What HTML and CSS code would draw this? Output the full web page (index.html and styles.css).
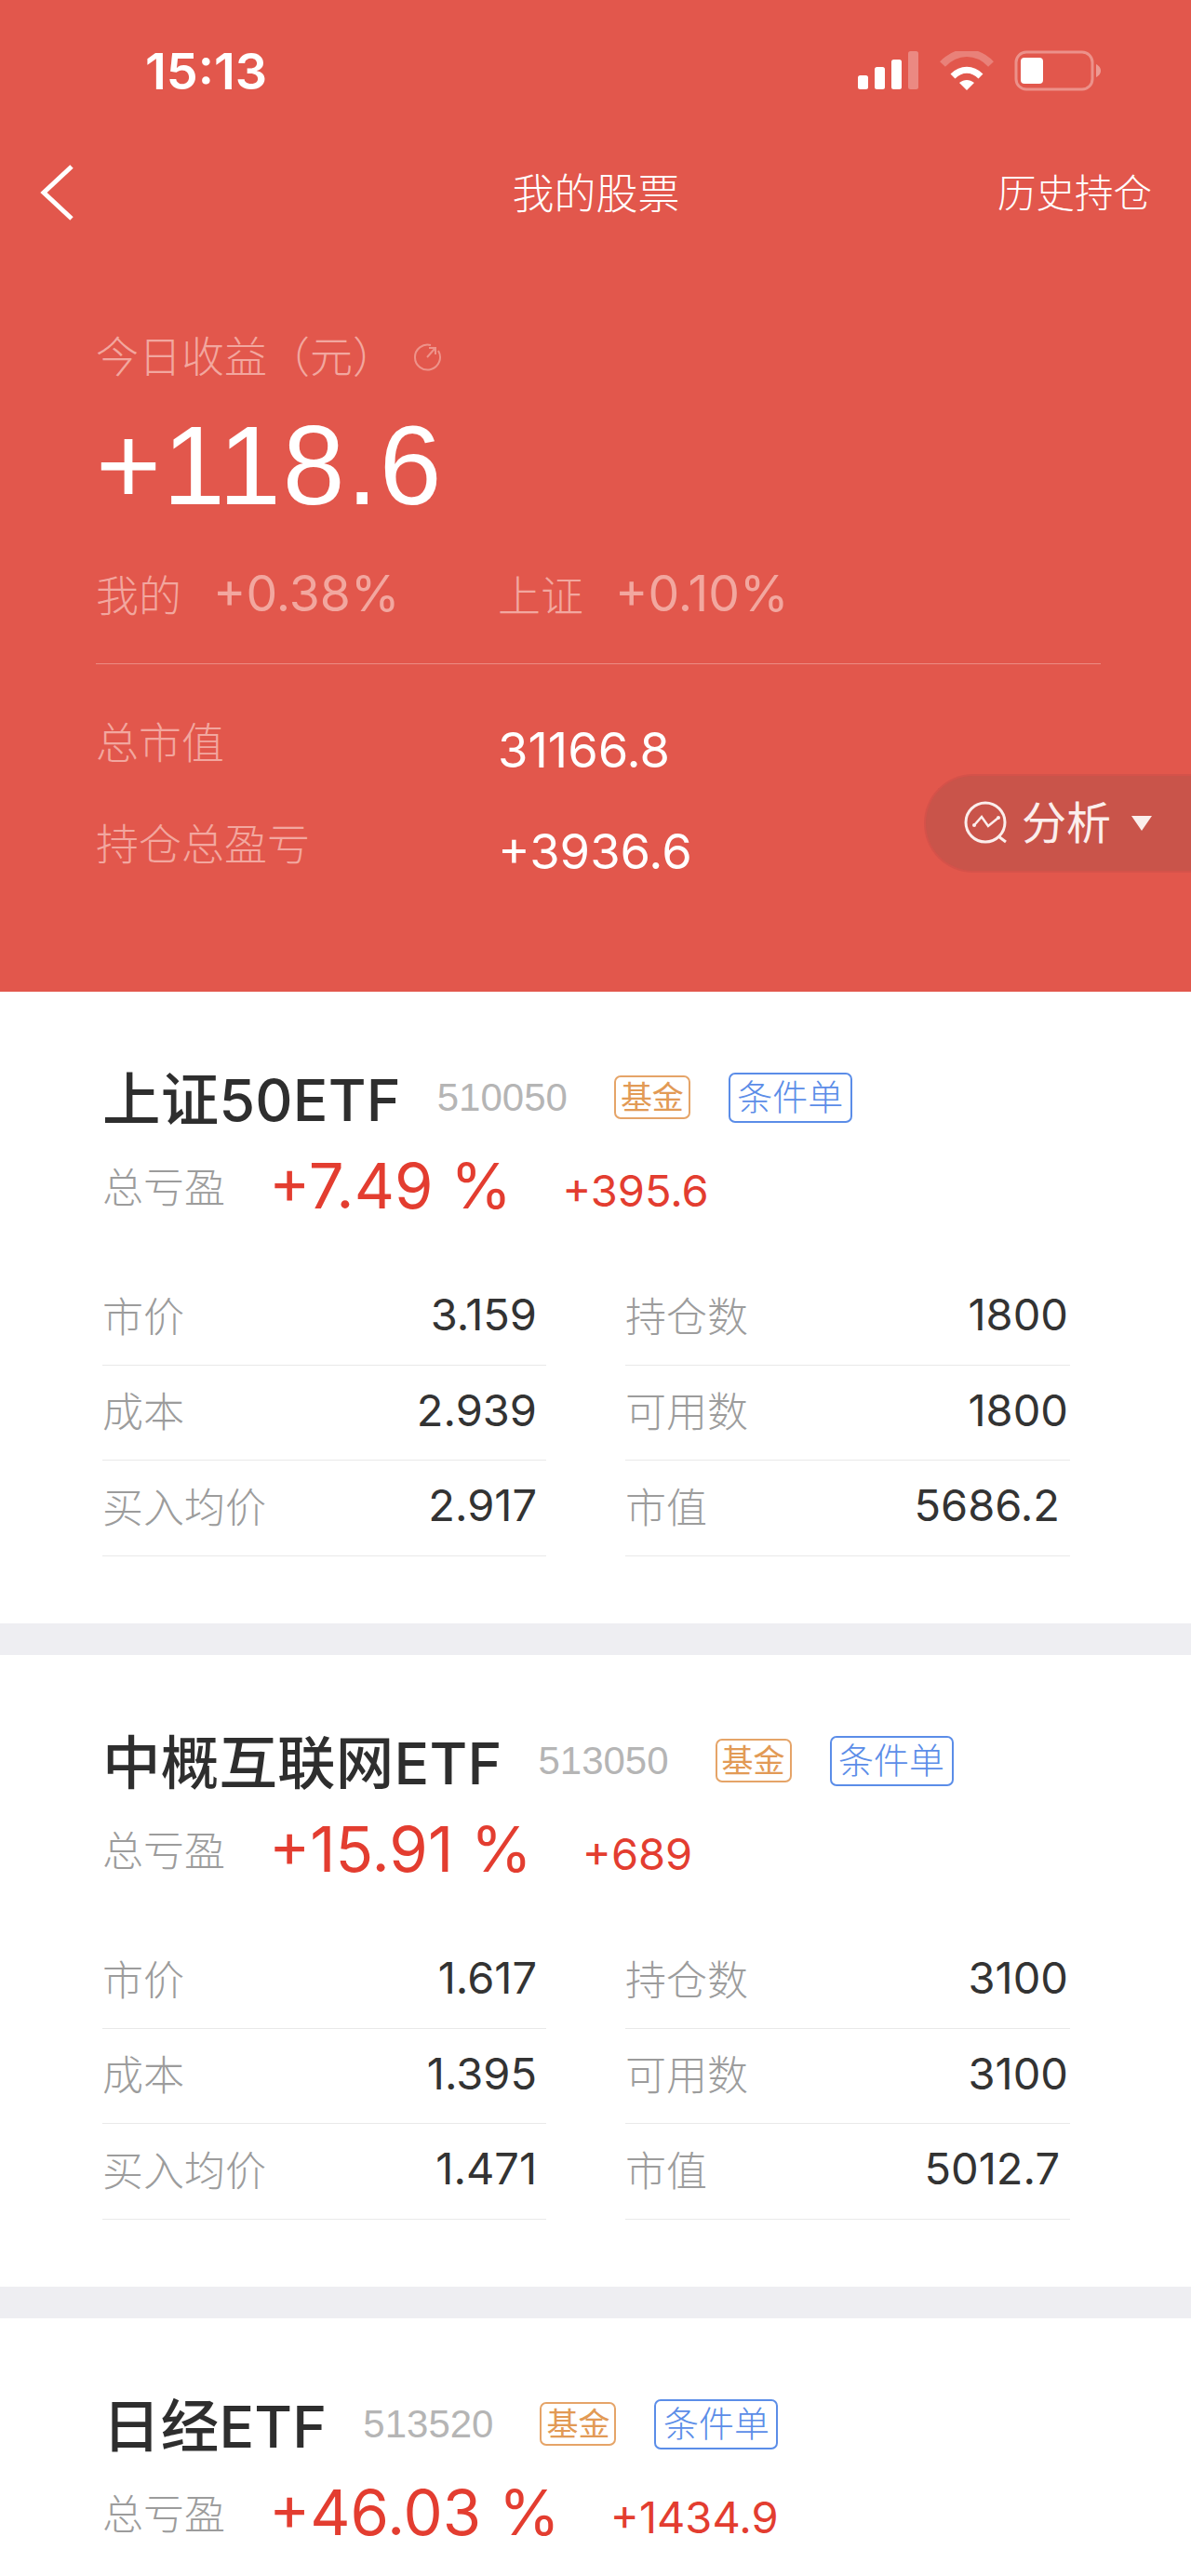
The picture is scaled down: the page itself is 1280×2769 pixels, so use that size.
FILE: index.html
```html
<!DOCTYPE html>
<html lang="zh-CN">
<head>
    <meta charset="UTF-8">
    <meta name="viewport" content="width=device-width, initial-scale=1.0">
    <title>我的股票</title>
    <link rel="stylesheet" href="styles.css">
</head>
<body>
    <div class="page">
        <header class="header">
            <div class="status">
                <span class="time">15:13</span>
                <div class="status-icons">
                    <svg width="66" height="42" viewBox="0 0 66 42">
                        <rect x="0" y="26" width="11" height="15" rx="2.5" fill="#fff"/>
                        <rect x="18" y="17" width="11" height="24" rx="2.5" fill="#fff"/>
                        <rect x="36" y="9" width="11" height="32" rx="2.5" fill="#fff"/>
                        <rect x="54" y="0" width="11" height="41" rx="2.5" fill="#fff" opacity="0.3"/>
                    </svg>
                    <svg width="58" height="42" viewBox="0 0 58 42">
                        <path d="M3 14 C18 -2 40 -2 55 14" fill="none" stroke="#fff" stroke-width="8" opacity="0.25"/>
                        <path d="M14 27 C23 18 35 18 44 27" fill="none" stroke="#fff" stroke-width="7"/>
                        <path d="M21 34 C26 30 32 30 37 34 L29 42 Z" fill="#fff"/>
                    </svg>
                    <svg width="93" height="44" viewBox="0 0 93 44">
                        <rect x="2" y="2" width="82" height="40" rx="11" fill="none" stroke="#fff" stroke-width="3" opacity="0.35"/>
                        <rect x="7" y="8" width="24" height="28" rx="4" fill="#fff"/>
                        <path d="M88 15 C92 17 93 20 93 22 C93 24 92 27 88 29 Z" fill="#fff" opacity="0.4"/>
                    </svg>
                </div>
            </div>
            <nav class="nav">
                <svg class="back" width="36" height="60" viewBox="0 0 36 60">
                    <path d="M34 2 L4 30 L34 58" fill="none" stroke="#fff" stroke-width="5"/>
                </svg>
                <span class="nav-title">我的股票</span>
                <span class="nav-link">历史持仓</span>
            </nav>
            <section class="summary">
                <div class="today">
                    <span>今日收益（元）</span>
                    <svg class="refresh" width="32" height="32" viewBox="0 0 32 32">
                        <path d="M20 4 A13.5 13.5 0 1 0 28 10" fill="none" stroke="#f2a79f" stroke-width="2"/>
                        <path d="M16 17 L24 8 M18 7 L25 7 L25 14" fill="none" stroke="#f2a79f" stroke-width="2"/>
                    </svg>
                </div>
                <div class="amount">+118.6</div>
                <div class="compare">
                    <div class="compare-item"><span class="cn">我的</span><span class="num">+0.38%</span></div>
                    <div class="compare-item"><span class="cn">上证</span><span class="num">+0.10%</span></div>
                </div>
                <div class="totals">
                    <span class="total-label">总市值</span>
                    <span class="total-value">31166.8</span>
                    <span class="total-label">持仓总盈亏</span>
                    <span class="total-value">+3936.6</span>
                </div>
            </section>
            <div class="analyse">
                <svg width="48" height="48" viewBox="0 0 48 48">
                    <circle cx="23" cy="23" r="21" fill="none" stroke="#fbeeec" stroke-width="3"/>
                    <path d="M37 38 L45 44" fill="none" stroke="#fbeeec" stroke-width="3"/>
                    <path d="M11 26 L19 17 L26 27 L37 18" fill="none" stroke="#fbeeec" stroke-width="2.5"/>
                    <circle cx="11" cy="26" r="2" fill="#fbeeec"/>
                    <circle cx="37" cy="18" r="2" fill="#fbeeec"/>
                </svg>
                <span>分析</span>
                <i class="caret"></i>
            </div>
        </header>

        <section class="card">
            <div class="card-head">
                <span class="name">上证50ETF</span>
                <span class="code">510050</span>
                <span class="tag tag-fund">基金</span>
                <span class="tag tag-order">条件单</span>
            </div>
            <div class="profit">
                <span class="profit-label">总亏盈</span>
                <span class="pct">+7.49 %</span>
                <span class="gain">+395.6</span>
            </div>
            <div class="grid">
                <div class="cell"><span>市价</span><b>3.159</b></div>
                <div class="cell"><span>持仓数</span><b>1800</b></div>
                <div class="cell"><span>成本</span><b>2.939</b></div>
                <div class="cell"><span>可用数</span><b>1800</b></div>
                <div class="cell"><span>买入均价</span><b>2.917</b></div>
                <div class="cell"><span>市值</span><b class="inset">5686.2</b></div>
            </div>
        </section>

        <section class="card">
            <div class="card-head">
                <span class="name">中概互联网ETF</span>
                <span class="code">513050</span>
                <span class="tag tag-fund">基金</span>
                <span class="tag tag-order">条件单</span>
            </div>
            <div class="profit">
                <span class="profit-label">总亏盈</span>
                <span class="pct">+15.91 %</span>
                <span class="gain">+689</span>
            </div>
            <div class="grid">
                <div class="cell"><span>市价</span><b>1.617</b></div>
                <div class="cell"><span>持仓数</span><b>3100</b></div>
                <div class="cell"><span>成本</span><b>1.395</b></div>
                <div class="cell"><span>可用数</span><b>3100</b></div>
                <div class="cell"><span>买入均价</span><b>1.471</b></div>
                <div class="cell"><span>市值</span><b class="inset">5012.7</b></div>
            </div>
        </section>

        <section class="card">
            <div class="card-head">
                <span class="name">日经ETF</span>
                <span class="code">513520</span>
                <span class="tag tag-fund">基金</span>
                <span class="tag tag-order">条件单</span>
            </div>
            <div class="profit">
                <span class="profit-label">总亏盈</span>
                <span class="pct">+46.03 %</span>
                <span class="gain">+1434.9</span>
            </div>
        </section>
    </div>
</body>
</html>
```

FILE: styles.css
```css
* {
    box-sizing: border-box;
}

body {
    margin: 0;
    background-color: #eeeef2;
    font-family: "Liberation Sans", "Noto Sans CJK SC", sans-serif;
}

.page {
    height: 2769px;
    overflow: hidden;
}

.header {
    position: relative;
    height: 1066px;
    background-color: #e2574c;
    color: #fff;
}

.status {
    display: flex;
    align-items: center;
    justify-content: space-between;
    height: 152px;
    padding: 0 97px 0 156px;
}

.time {
    font-family: Inter, sans-serif;
    font-size: 54px;
    font-weight: 600;
}

.status-icons {
    display: flex;
    align-items: center;
    gap: 22px;
}

.nav {
    display: grid;
    grid-template-columns: 1fr auto 1fr;
    align-items: center;
    height: 110px;
    padding: 0 42px 0 43px;
}

.back {
    display: block;
}

.nav-title {
    margin-bottom: 4px;
    font-size: 45px;
    font-weight: 300;
}

.nav-link {
    justify-self: end;
    margin-bottom: 4px;
    font-size: 41.5px;
    font-weight: 300;
}

.summary {
    padding: 88px 97px 0 103px;
}

.today {
    display: flex;
    align-items: center;
    height: 60px;
    color: #f2a79f;
    font-size: 46px;
    font-weight: 300;
}

.refresh {
    margin: 6px 0 0 18px;
    opacity: 0.75;
}

.amount {
    margin-top: 30px;
    font-size: 120px;
    letter-spacing: 2px;
    line-height: 120px;
}

.compare {
    display: grid;
    grid-template-columns: 432px 1fr;
    margin-top: 48px;
    padding-bottom: 31px;
    border-bottom: 1px solid #ec8c84;
    color: #f2a79f;
    line-height: 60px;
}

.compare-item .cn {
    font-size: 46px;
    font-weight: 300;
}

.compare-item .num {
    margin-left: 34px;
    font-family: Inter, sans-serif;
    font-size: 53.5px;
}

.totals {
    display: grid;
    grid-template-columns: 432px 1fr;
    row-gap: 42px;
    margin-top: 55px;
    line-height: 60px;
}

.total-label {
    color: #f2a79f;
    font-size: 46px;
    font-weight: 300;
}

.total-value {
    padding-top: 7px;
    font-family: Inter, sans-serif;
    font-size: 52.5px;
}

.analyse {
    position: absolute;
    top: 832px;
    right: 0;
    display: flex;
    align-items: center;
    width: 287px;
    height: 106px;
    padding-left: 41px;
    border: 2px solid #d5524a;
    border-right: none;
    border-radius: 53px 0 0 53px;
    background-color: #c9544a;
    color: #fbeeec;
    font-size: 48px;
    font-weight: 400;
}

.analyse span {
    margin: 0 0 8px 14px;
}

.caret {
    width: 0;
    height: 0;
    margin-left: 22px;
    border-top: 16px solid #fbeeec;
    border-left: 11px solid transparent;
    border-right: 11px solid transparent;
}

.card {
    height: 679px;
    margin-bottom: 34px;
    padding: 67px 130px 0 110px;
    background-color: #fff;
}

.card-head {
    display: flex;
    align-items: center;
    height: 90px;
}

.name {
    padding-bottom: 2px;
    color: #2e2e2e;
    font-family: Inter, "Noto Sans CJK SC", sans-serif;
    font-size: 62.5px;
    font-weight: 500;
    letter-spacing: 0.2px;
}

.code {
    margin: 3px 0 0 39px;
    color: #b5b5b5;
    font-size: 42px;
}

.tag {
    display: flex;
    align-items: center;
    justify-content: center;
    margin-top: 3px;
    border-radius: 7px;
    line-height: 1;
}

.tag-fund {
    width: 82px;
    height: 47px;
    margin-left: 50px;
    border: 2px solid #e5a468;
    color: #e29a55;
    font-size: 34px;
}

.tag-order {
    width: 133px;
    height: 54px;
    margin-left: 41px;
    border: 2px solid #5b8de8;
    color: #5b8de8;
    font-size: 38px;
    font-weight: 300;
}

.profit {
    display: flex;
    align-items: center;
    height: 80px;
    margin-top: 11px;
}

.profit-label {
    color: #9c9c9c;
    font-size: 44px;
    font-weight: 300;
}

.pct {
    margin-left: 47px;
    color: #e33d30;
    font-family: Inter, sans-serif;
    font-size: 67px;
}

.gain {
    margin-left: 54px;
    padding-top: 10px;
    color: #e33d30;
    font-family: Inter, sans-serif;
    font-size: 47px;
}

.grid {
    display: grid;
    grid-template-columns: 477px 478px;
    column-gap: 85px;
    margin-top: 51px;
}

.cell {
    display: flex;
    align-items: center;
    justify-content: space-between;
    height: 102.5px;
    padding: 0 10px 6px 0;
    border-bottom: 1px solid #e9e9e9;
}

.cell:nth-child(even) {
    padding-right: 2px;
}

.cell span {
    color: #9c9c9c;
    font-size: 44px;
    font-weight: 300;
}

.cell b {
    color: #333;
    font-family: Inter, sans-serif;
    font-size: 47px;
    font-weight: 400;
}

.cell .inset {
    margin-right: 9px;
}
```
